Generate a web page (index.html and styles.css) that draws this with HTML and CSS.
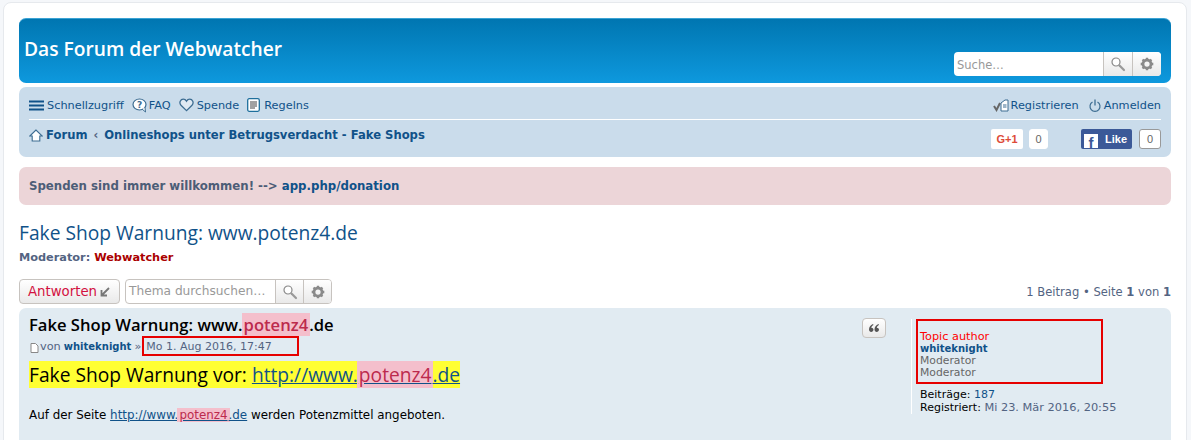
FILE: index.html
```html
<!DOCTYPE html>
<html lang="de">
<head>
<meta charset="utf-8">
<title>Fake Shop Warnung: www.potenz4.de</title>
<link rel="stylesheet" href="styles.css">
</head>
<body>
<div class="wrap">
  <header class="headerbar">
    <h1 class="site-title">Das Forum der Webwatcher</h1>
    <div class="searchbox header-search">
      <span class="search-input">Suche…</span>
      <span class="search-btn"><svg width="16" height="16" viewBox="0 0 16 16"><circle cx="6" cy="6" r="4" fill="#fff" stroke="#888" stroke-width="1.200"/><path d="M9.500 9.500l4.500 4.500" stroke="#999" stroke-width="2.200" stroke-linecap="round"/></svg></span>
      <span class="search-btn"><svg width="14" height="14" viewBox="0 0 16 16"><circle cx="8" cy="8" r="4.600" fill="none" stroke="#8a8a8a" stroke-width="3.200"/><path d="M8 .8v3M8 12.200v3M.8 8h3M12.200 8h3M2.900 2.900l2.100 2.100M11 11l2.100 2.100M2.900 13.100L5 11M11 5l2.100-2.100" stroke="#8a8a8a" stroke-width="2.600"/></svg></span>
    </div>
  </header>

  <nav class="navbar">
    <div class="nav-row top">
      <ul class="nav-links">
        <li><svg width="15" height="11" viewBox="0 0 15 11"><path d="M0 1.500h15M0 5.500h15M0 9.500h15" stroke="#105289" stroke-width="2"/></svg><a>Schnellzugriff</a></li>
        <li class="gap-s"><svg width="16" height="15" viewBox="0 0 16 15"><ellipse cx="7.500" cy="6.500" rx="6.500" ry="5.500" fill="#fff" stroke="#3d6d92" stroke-width="1.200"/><path d="M10 11l3.500 3-.5-4.500" fill="#fff" stroke="#3d6d92"/><text x="7.500" y="10" font-size="9" font-weight="700" text-anchor="middle" fill="#3d6d92" font-family="DejaVu Sans">?</text></svg><a>FAQ</a></li>
        <li><svg width="15" height="14" viewBox="0 0 15 14"><path d="M7.500 12.600L2 7.200C-.3 4.600 1.500 1.200 4.300 1.200c1.500 0 2.500.8 3.200 2 .7-1.200 1.700-2 3.200-2 2.800 0 4.600 3.400 2.300 6z" fill="#dfe9f3" stroke="#3d6d92" stroke-width="1.300"/></svg><a>Spende</a></li>
        <li class="gap-m"><svg width="13" height="14" viewBox="0 0 13 14"><rect x=".7" y=".7" width="11.600" height="12.600" rx="1.500" fill="#fff" stroke="#1e6f9c" stroke-width="1.300"/><path d="M3 4h7M3 6h7M3 8h7M3 10h5" stroke="#444" stroke-width="1"/></svg><a>Regelns</a></li>
      </ul>
      <ul class="nav-links right">
        <li class="tight"><svg width="17" height="13" viewBox="0 0 17 13"><path d="M1 7l2.500 4L7 4" fill="none" stroke="#666" stroke-width="2"/><path d="M8 4l4-3h3v11H8z" fill="#fff" stroke="#3d6d92"/><path d="M10 6h3.500M10 8h3.500" stroke="#3d6d92"/></svg><a>Registrieren</a></li>
        <li><svg width="12" height="13" viewBox="0 0 12 13"><path d="M3.500 3a5 5 0 1 0 5 0" fill="none" stroke="#3d6d92" stroke-width="1.200"/><path d="M6 .5v6" stroke="#3d6d92" stroke-width="1.300"/></svg><a>Anmelden</a></li>
      </ul>
    </div>
    <div class="nav-row bottom">
      <div class="crumbs">
        <svg width="14" height="13" viewBox="0 0 14 13"><path d="M7 1L.8 7h2.400v5h7.600V7h2.400z" fill="#fff" stroke="#3d6d92" stroke-width="1.100"/></svg>
        <a>Forum</a><span class="crumb-sep">‹</span><a>Onlineshops unter Betrugsverdacht - Fake Shops</a>
      </div>
      <div class="social">
        <span class="gplus">G+1</span><span class="count g-count">0</span>
        <span class="fb"><span class="fb-f">f</span>Like</span><span class="count fb-count">0</span>
      </div>
    </div>
  </nav>

  <div class="notice"><span class="notice-text">Spenden sind immer willkommen! --&gt;</span> <a>app.php/donation</a></div>

  <h2 class="topic-title">Fake Shop Warnung: www.potenz4.de</h2>
  <p class="moderators">Moderator: <a>Webwatcher</a></p>

  <div class="action-bar">
    <a class="btn-reply">Antworten<svg width="10" height="10" viewBox="0 0 10 10"><path d="M9 1L2.500 7.500M1.500 3v5.500H7" fill="none" stroke="#777" stroke-width="1.800"/></svg></a>
    <div class="searchbox topic-search">
      <span class="search-input">Thema durchsuchen…</span>
      <span class="search-btn"><svg width="16" height="16" viewBox="0 0 16 16"><circle cx="6" cy="6" r="4" fill="#fff" stroke="#888" stroke-width="1.200"/><path d="M9.500 9.500l4.500 4.500" stroke="#999" stroke-width="2.200" stroke-linecap="round"/></svg></span>
      <span class="search-btn"><svg width="14" height="14" viewBox="0 0 16 16"><circle cx="8" cy="8" r="4.600" fill="none" stroke="#8a8a8a" stroke-width="3.200"/><path d="M8 .8v3M8 12.200v3M.8 8h3M12.200 8h3M2.900 2.900l2.100 2.100M11 11l2.100 2.100M2.900 13.100L5 11M11 5l2.100-2.100" stroke="#8a8a8a" stroke-width="2.600"/></svg></span>
    </div>
    <div class="pagination">1 Beitrag • Seite <b>1</b> von <b>1</b></div>
  </div>

  <article class="post">
    <div class="postbody">
      <div class="post-head">
        <div>
          <h3 class="post-title">Fake Shop Warnung: www.<span class="hl">potenz4</span>.de</h3>
          <p class="author"><svg width="9" height="10" viewBox="0 0 9 10"><path d="M1 .5h4.500L8 3v6.500H1z" fill="#fff" stroke="#888"/></svg><span class="von">von</span><a>whiteknight</a><span class="raquo">»</span><span class="date-box">Mo 1. Aug 2016, 17:47</span></p>
        </div>
        <span class="quote-btn"><svg width="10" height="8" viewBox="0 0 10 8"><path d="M4 0C1.500 1 0 3 0 5.500 0 7 1 8 2.200 8S4.500 7 4.500 5.800 3.500 3.700 2.300 3.700C2.400 2.700 3.200 1.600 4.500.9zM9.500 0C7 1 5.500 3 5.500 5.500 5.500 7 6.500 8 7.700 8S10 7 10 5.800 9 3.700 7.800 3.700C7.900 2.700 8.700 1.600 10 .9z" fill="#555"/></svg></span>
      </div>
      <p class="big-line"><span class="yellow">Fake Shop Warnung vor: <a>http://www.<span class="hl">potenz4</span>.de</a></span></p>
      <p class="text-line">Auf der Seite <a>http://www.<span class="hl">potenz4</span>.de</a> werden Potenzmittel angeboten.</p>
    </div>
    <aside class="profile">
      <div class="profile-box">
        <div class="rank-topic">Topic author</div>
        <div class="prof-name">whiteknight</div>
        <div class="rank">Moderator</div>
        <div class="rank">Moderator</div>
      </div>
      <div class="stat"><b>Beiträge:</b> <a>187</a></div>
      <div class="stat"><b>Registriert:</b> <span class="stat-val">Mi 23. Mär 2016, 20:55</span></div>
    </aside>
  </article>
</div>
</body>
</html>
```
FILE: styles.css
```css
* { box-sizing: border-box; }
html, body { margin: 0; padding: 0; height: 440px; overflow: hidden; }
body { background: #f5f7fa; font-family: "DejaVu Sans", Verdana, sans-serif; font-size: 11.3px; color: #536482; }
ul { list-style: none; margin: 0; padding: 0; }
p, h1, h2, h3 { margin: 0; }
a { color: #105289; }
.wrap { width: 1184px; margin: 2px 0 0 3px; height: 500px; padding: 15px 15px 0; background: #fff; border: 1px solid #e6e9ed; border-radius: 8px; }

.headerbar { height: 65px; display: flex; justify-content: space-between; padding: 18px 10px 0 5px; border-radius: 7px; background: linear-gradient(#0076b1, #12a3eb 130%); border-top: 1px solid #3aa3d4; }
.site-title { font-family: "Open Sans", sans-serif; font-size: 19.2px; font-weight: 600; line-height: 24px; color: #fff; }
.searchbox { display: flex; height: 24px; background: #fff; border-radius: 4px; color: #999; font-size: 11.5px; overflow: hidden; }
.header-search { width: 207px; margin-top: 15px; }
.search-input { flex: 1; padding-left: 3px; line-height: 27px; }
.search-btn { width: 29px; display: flex; align-items: center; justify-content: center; background: linear-gradient(#fff, #e9e9e9); border-left: 1px solid #c7c3bf; }

.navbar { margin-top: 4px; height: 70px; padding: 3px 10px 0; background: #cadceb; border-radius: 7px; }
.nav-row { display: flex; justify-content: space-between; }
.nav-row.top { height: 30px; padding-top: 1px; border-bottom: 1px solid #fff; align-items: center; }
.nav-links { display: flex; gap: 8px; }
.nav-links li { display: flex; align-items: center; gap: 3px; }
.nav-links .gap-s { gap: 1px; }
.nav-links .gap-m { gap: 4px; }
.nav-links.right { gap: 10px; }
.nav-links .tight { gap: 1px; }
.nav-row.bottom { height: 30px; align-items: center; }
.crumbs { display: flex; align-items: center; font-weight: 700; font-size: 11.6px; }
.crumbs svg { margin-right: 3px; }
.crumb-sep { margin: 0 6px; color: #536482; }
.social { display: flex; align-items: center; font-family: "Liberation Sans", sans-serif; padding-top: 8px; }
.gplus { width: 32px; height: 20px; background: #fff; color: #dd4b39; font-weight: 700; font-size: 11px; line-height: 20px; text-align: center; border-radius: 2px; }
.count { height: 20px; line-height: 18px; text-align: center; background: #fff; color: #666; border: 1px solid #ccc; border-radius: 3px; font-size: 11px; }
.g-count { width: 19px; margin-left: 6px; border-color: #fff; }
.fb { display: flex; align-items: center; width: 51px; height: 20px; margin-left: 33px; background: #3b5998; color: #fff; font-weight: 700; font-size: 11px; border-radius: 2px; overflow: hidden; }
.fb-f { width: 14px; height: 14px; margin: 3px 7px 0 3px; background: #fff; color: #3b5998; font-size: 15px; line-height: 17px; text-align: center; }
.fb-count { width: 22px; margin-left: 7px; border-color: #999; }

.notice { margin-top: 10px; height: 38px; padding-left: 10px; line-height: 39px; background: #ecd5d8; border-radius: 7px; font-size: 11.76px; font-weight: 700; }
.notice-text { color: #4c5d77; }
.topic-title { margin-top: 16px; font-family: "Open Sans", sans-serif; font-size: 19.2px; font-weight: 400; line-height: 24px; color: #105289; }
.moderators { margin-top: 6px; line-height: 14px; font-weight: 700; font-size: 11.3px; }
.moderators a { color: #aa0000; }

.action-bar { display: flex; align-items: center; margin-top: 14px; height: 25px; }
.btn-reply { display: flex; align-items: center; gap: 3px; width: 101px; height: 25px; padding-left: 8px; border: 1px solid #c7c3bf; border-radius: 4px; background: linear-gradient(#fff, #e9e9e9); color: #d31141; font-size: 13.3px; }
.topic-search { width: 207px; height: 25px; margin-left: 5px; border: 1px solid #c7c3bf; font-size: 12.2px; }
.topic-search .search-input { padding-left: 3px; line-height: 23px; }
.topic-search .search-btn { width: 28px; }
.pagination { margin-left: auto; font-size: 11.55px; }
.pagination b { color: #536482; }

.post { display: flex; justify-content: space-between; margin-top: 4px; height: 200px; padding: 7px 10px; background: #e1ebf2; border-radius: 7px; }
.postbody { width: 857px; }
.post-head { display: flex; justify-content: space-between; }
.post-title { font-family: "Open Sans", sans-serif; font-size: 16.6px; font-weight: 600; line-height: 19px; color: #000; }
.hl { background: #f4bfcc; color: #bc2a4d; padding: 0 2px; margin: 0 -1px; }
.author { display: flex; align-items: baseline; margin-top: 6px; line-height: 14px; font-size: 11.3px; }
.author svg { margin-right: 1px; margin-left: 1px; align-self: center; }
.author a { font-weight: 700; font-size: 10px; margin: 0 3px 0 3px; }
.von { color: #536482; }
.raquo { margin-right: 1px; }
.date-box { width: 157px; height: 20px; margin-top: -4px; padding-left: 2px; line-height: 18px; border: 2px solid #e60000; font-size: 11px; color: #536482; }
.quote-btn { display: flex; align-items: center; justify-content: center; width: 24px; height: 20px; margin-top: 3px; border: 1px solid #c7c3bf; border-radius: 4px; background: linear-gradient(#fff, #e9e9e9); }
.big-line { margin-top: 7px; font-family: "Open Sans", sans-serif; font-size: 19.2px; line-height: 24px; color: #000; }
.yellow { background: #ffff33; }
.big-line a, .text-line a { text-decoration: underline; }
.text-line { margin-top: 20px; font-size: 11.9px; line-height: 16px; color: #000; }

.profile { width: 250px; margin-top: 4px; height: 95px; padding-left: 8px; border-left: 1px solid #fff; font-size: 10.8px; line-height: 12px; color: #000; }
.profile-box { width: 187px; height: 65px; margin-left: -4px; padding: 10px 0 0 2px; border: 2px solid #e60000; margin-bottom: 5px; }
.rank-topic { color: #ff0000; font-size: 11.3px; }
.prof-name { color: #105289; font-weight: 700; font-size: 10px; }
.rank { color: #666; }
.stat { font-size: 11px; }
.stat b { font-weight: 400; }
.stat-val { color: #536482; font-size: 11.35px; }
```
